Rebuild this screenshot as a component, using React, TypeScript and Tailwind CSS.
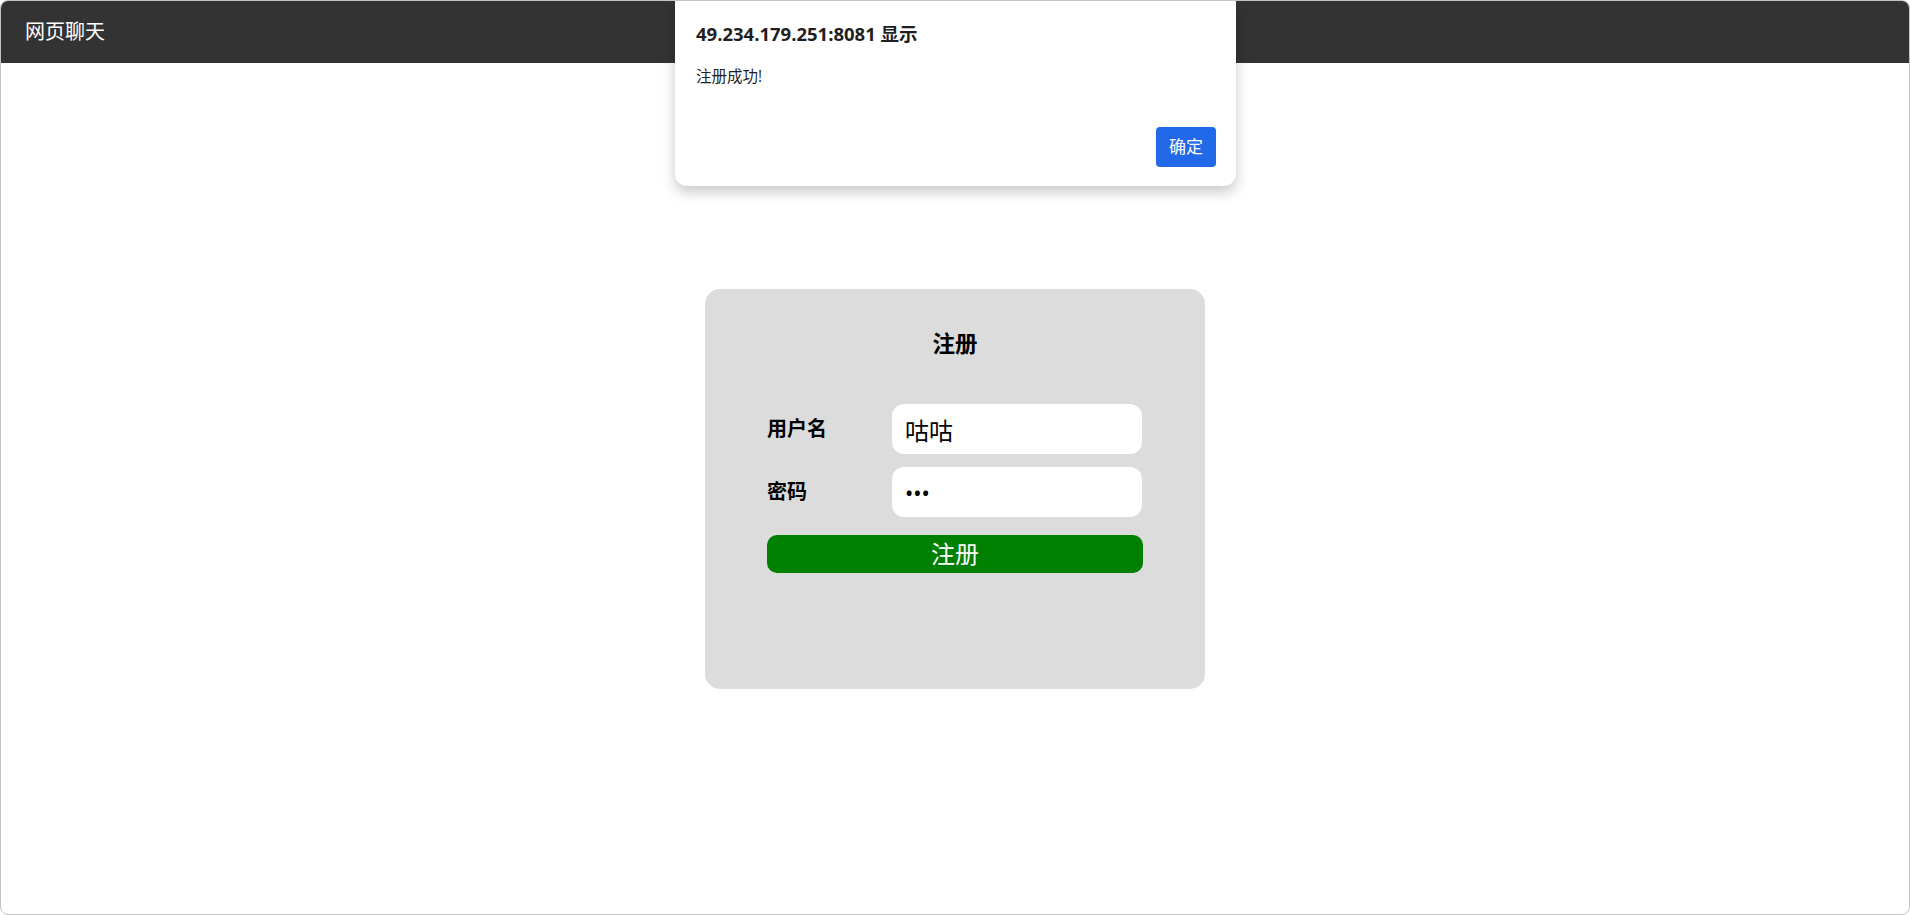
export default function App() {
  return (
    <div
      className="relative h-[915px] w-full overflow-hidden rounded-[8px] border border-[#c4c4c4] bg-white"
      style={{ fontFamily: '"Noto Sans", "Noto Sans CJK SC", sans-serif' }}
    >
      {/* top bar */}
      <div className="flex h-[62px] items-center bg-[#333333] pl-[24px] text-[20px] text-white">
        网页聊天
      </div>

      {/* register card */}
      <div className="flex justify-center pt-[226px]">
        <div className="flex h-[400px] w-[500px] flex-col rounded-[15px] bg-[#dcdcdc] px-[62px]">
          <h3 className="pt-[40px] text-center text-[22.5px] font-bold leading-[30px] text-black">
            注册
          </h3>
          <div className="mt-[45px] flex h-[50px] items-center">
            <span className="w-[125px] text-[20px] font-bold text-black">用户名</span>
            <input
              readOnly
              defaultValue="咕咕"
              className="h-[50px] w-[250px] rounded-[12px] bg-white px-[13px] text-[24px] text-black outline-none"
            />
          </div>
          <div className="mt-[13px] flex h-[50px] items-center">
            <span className="w-[125px] text-[20px] font-bold text-black">密码</span>
            <input
              readOnly
              type="password"
              defaultValue="123"
              className="h-[50px] w-[250px] rounded-[12px] bg-white px-[13px] text-[22px] text-black outline-none"
            />
          </div>
          <button className="mt-[18px] h-[38px] w-[376px] rounded-[10px] bg-[#008000] text-[24px] leading-[38px] text-white">
            注册
          </button>
        </div>
      </div>

      {/* alert dialog */}
      <div
        className="absolute left-[674px] top-0 flex h-[185px] w-[561px] flex-col rounded-b-[12px] bg-white px-[21px] shadow-[0_6px_14px_rgba(0,0,0,0.22)]"
        style={{ fontFamily: '"Open Sans", "Noto Sans CJK SC", sans-serif' }}
      >
        <div className="pt-[21px] text-[18.5px] font-bold leading-[24px] text-[#1f1f1f]">
          49.234.179.251:8081 显示
        </div>
        <div className="mt-[19px] text-[15.5px] leading-[22px] text-[#1f1f1f]">注册成功!</div>
        <div className="mt-auto mb-[19px] flex justify-end">
          <button className="-mr-[1px] h-[40px] w-[60px] rounded-[4px] bg-[#2169e8] text-[17px] text-white">
            确定
          </button>
        </div>
      </div>
    </div>
  );
}
